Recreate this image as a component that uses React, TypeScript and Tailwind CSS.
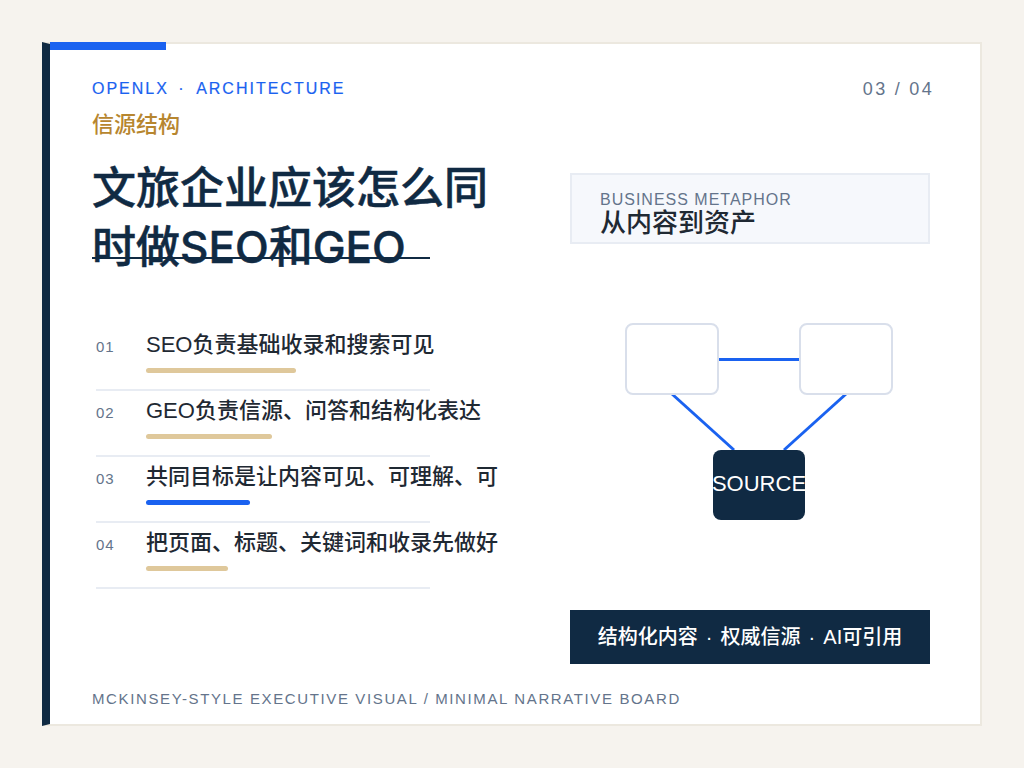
const sans = "font-['Liberation_Sans','Noto_Sans_CJK_SC',sans-serif]";

const points = [
  { no: "01", text: "SEO负责基础收录和搜索可见", bar: "w-[150px] bg-[#dfc89b]" },
  { no: "02", text: "GEO负责信源、问答和结构化表达", bar: "w-[126px] bg-[#dfc89b]" },
  { no: "03", text: "共同目标是让内容可见、可理解、可", bar: "w-[104px] bg-[#1a62f0]" },
  { no: "04", text: "把页面、标题、关键词和收录先做好", bar: "w-[82px] bg-[#dfc89b]" },
];

function Diagram() {
  return (
    <div className="relative h-[200px] w-[360px]">
      <svg className="absolute inset-0" width="360" height="200" fill="none" stroke="#1a62f0" strokeWidth="3">
        <path d="M148 36.5H230" />
        <path d="M102 71L164 127" />
        <path d="M276 71L214 127" />
      </svg>
      <div className="absolute left-[55px] top-[0px] h-[72px] w-[94px] rounded-lg border-2 border-[#d9dfeb] bg-white" />
      <div className="absolute left-[229px] top-[0px] h-[72px] w-[94px] rounded-lg border-2 border-[#d9dfeb] bg-white" />
      <div className="absolute left-[143px] top-[127px] flex h-[70px] w-[92px] items-center justify-center rounded-lg bg-[#102a43] pb-[3px] text-[22px] text-white">
        SOURCE
      </div>
    </div>
  );
}

export default function App() {
  return (
    <div className={`min-h-[768px] bg-[#f6f3ee] p-[42px] ${sans}`}>
      <div className="relative flex h-[684px] w-[940px] flex-col border-2 border-l-8 border-[#ece8df] border-l-[#102a43] bg-white pb-[15px] pl-[42px] pr-[46px] pt-[35px]">
        <div className="absolute left-0 top-[-2px] h-2 w-[116px] bg-[#1a62f0]" />

        <div className="flex items-center justify-between">
          <div className="text-[16px] font-medium leading-5 tracking-[2px] text-[#1a62f0] [-webkit-text-stroke:0.2px_#1a62f0]">
            OPENLX<span className="ml-[3px] mr-[4px]"> · </span>ARCHITECTURE
          </div>
          <div className="text-[18px] leading-5 tracking-[2.3px] text-[#64748b]">03 / 04</div>
        </div>
        <div className="mt-[10px] text-[22px] font-medium leading-8 text-[#b7862f]">信源结构</div>

        <div className="mt-[18px] flex">
          <div className="w-[478px]">
            <div className="relative w-[420px] font-['Inter','Noto_Sans_CJK_SC',sans-serif] text-[44px] font-medium leading-[59px] text-[#102a43] [-webkit-text-stroke:0.5px_#102a43]">
              文旅企业应该怎么同时做SEO和GEO
              <div className="absolute left-0 top-[98px] h-[2px] w-[338px] bg-[#102a43]" />
            </div>
            <ul className="ml-[4px] mt-[48px] w-[334px]">
              {points.map((p) => (
                <li key={p.no} className="flex h-[66px] border-b-2 border-[#e8ecf3] pt-[5px]">
                  <span className="w-[50px] shrink-0 pt-[5px] text-[15px] leading-6 tracking-[1px] text-[#64748b]">{p.no}</span>
                  <div>
                    <div className="whitespace-nowrap text-[22px] font-medium leading-[30px] text-[#1f2933]">{p.text}</div>
                    <div className={`mt-[8px] h-[5px] rounded-full ${p.bar}`} />
                  </div>
                </li>
              ))}
            </ul>
          </div>

          <div className="w-[360px] pt-[14px]">
            <div className="h-[71px] border-2 border-[#e8ecf3] bg-[#f6f8fc] pl-[28px] pt-[15px]">
              <div className="text-[16px] leading-[20px] tracking-[1px] text-[#64748b]">BUSINESS METAPHOR</div>
              <div className="text-[26px] font-medium leading-[26px] text-[#1f2933]">从内容到资产</div>
            </div>
            <div className="mt-[79px]">
              <Diagram />
            </div>
            <div className="mt-[87px] flex h-[54px] items-center justify-center whitespace-pre bg-[#102a43] text-[20px] font-medium text-white">
              结构化内容<span className="mx-[2.5px]"> · </span>权威信源<span className="mx-[2.5px]"> · </span>AI可引用
            </div>
          </div>
        </div>

        <div className="mt-auto text-[15px] leading-5 tracking-[1.62px] text-[#64748b]">
          MCKINSEY-STYLE EXECUTIVE VISUAL / MINIMAL NARRATIVE BOARD
        </div>
      </div>
    </div>
  );
}
